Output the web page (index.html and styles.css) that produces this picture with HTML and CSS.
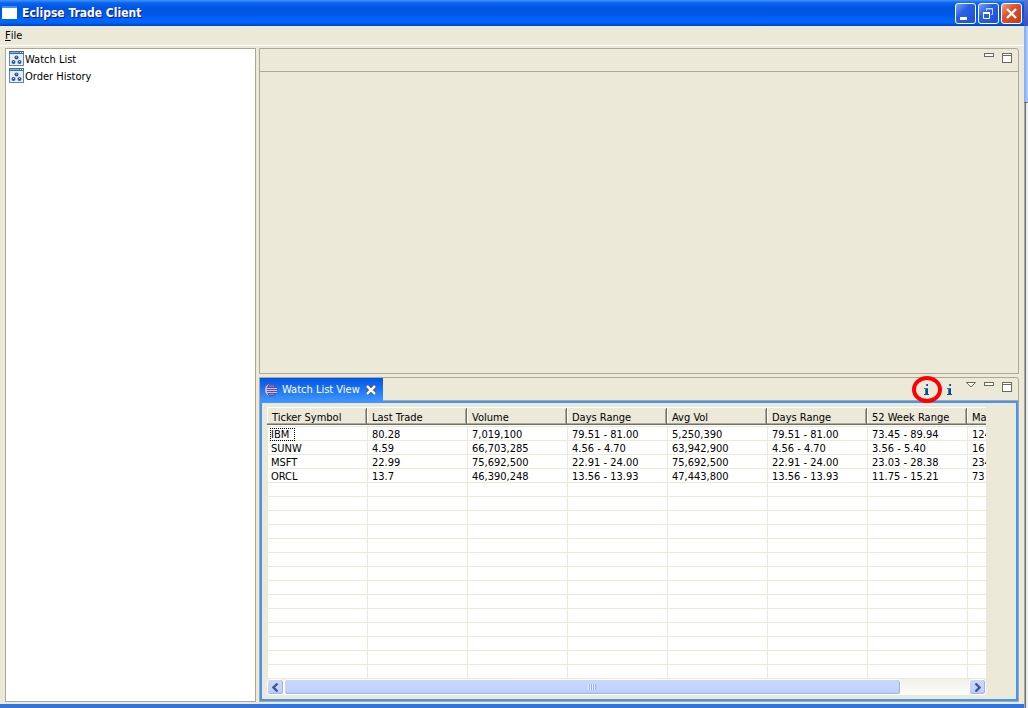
FILE: index.html
```html
<!DOCTYPE html>
<html lang="en">
<head>
  <meta charset="UTF-8">
  <meta name="viewport" content="width=device-width, initial-scale=1.0">
  <title>Eclipse Trade Client</title>
  <link rel="stylesheet" href="styles.css">
</head>
<body>
  <svg class="defs" width="0" height="0" aria-hidden="true">
    <symbol id="icon-view" viewBox="0 0 15 15">
      <rect x="0.5" y="0.5" width="14" height="14" fill="#e6eff8" stroke="#5f86b2"/>
      <rect x="0" y="0" width="15" height="3" fill="#3a6da8"/>
      <path d="M1 1h9v1H1z" fill="#7db0e0"/>
      <path d="M11 1h1v1h-1zM13 1h1v1h-1z" fill="#fff"/>
      <circle cx="7.5" cy="6.5" r="2" fill="#2f5a96"/>
      <circle cx="4.5" cy="11" r="2" fill="#2f5a96"/>
      <circle cx="10.5" cy="11" r="2" fill="#2f5a96"/>
      <path d="M7 5.500h1v1H7zM4 10h1v1H4zM10 10h1v1h-1z" fill="#b4cdec"/>
    </symbol>
    <symbol id="icon-min" viewBox="0 0 10 10">
      <rect x="0.5" y="0.5" width="9" height="3" fill="#fff" stroke="#6b6a5c"/>
    </symbol>
    <symbol id="icon-max" viewBox="0 0 10 10">
      <rect x="0.5" y="0.5" width="9" height="9" fill="#fff" stroke="#6b6a5c"/>
      <path d="M0 2h10v1H0z" fill="#6b6a5c"/>
    </symbol>
    <symbol id="icon-info" viewBox="0 0 6 11">
      <path d="M2 0h2v2H2zM0 4h4v6h1v1H0v-1h1V5H0z" fill="#2f7db8"/>
      <path d="M3 0h1v2H3zM2 5h2v5H2zM0 10h5v1H0z" fill="#124a86"/>
    </symbol>
  </svg>

  <div class="window">
    <header class="titlebar">
      <span class="app-icon"></span>
      <h1>Eclipse Trade Client</h1>
      <div class="window-buttons">
        <button class="win-btn" aria-label="Minimize">
          <svg width="19" height="19"><path d="M4 13h7v3H4z" fill="#fff"/></svg>
        </button>
        <button class="win-btn" aria-label="Restore">
          <svg width="19" height="19"><path d="M7.500 7V4.500h6v6H12M7 5h7" fill="none" stroke="#c9d8fa"/><path d="M4.500 8v6.500h6V8M4 8.500h7M4 9.500h7" fill="none" stroke="#fff"/></svg>
        </button>
        <button class="win-btn close" aria-label="Close">
          <svg width="19" height="19"><path d="M5 5l9 9M14 5l-9 9" stroke="#fff" stroke-width="2.400"/></svg>
        </button>
      </div>
    </header>

    <nav class="menubar">
      <button><u>F</u>ile</button>
    </nav>

    <main class="workbench">
      <ul class="tree">
        <li><svg width="15" height="15"><use href="#icon-view"/></svg><a href="#watch">Watch List</a></li>
        <li><svg width="15" height="15"><use href="#icon-view"/></svg><a href="#orders">Order History</a></li>
      </ul>

      <div class="stack">
        <section class="pane editor">
          <div class="pane-head">
            <div class="pane-tools">
              <button aria-label="Minimize"><svg width="10" height="10"><use href="#icon-min"/></svg></button>
              <button aria-label="Maximize"><svg width="10" height="10"><use href="#icon-max"/></svg></button>
            </div>
          </div>
        </section>

        <section class="pane view" id="watch">
          <div class="pane-head">
            <div class="tab">
              <svg width="14" height="14" viewBox="0 0 14 14">
                <circle cx="7" cy="7" r="6.500" fill="#5a50a0"/>
                <path d="M5 1a6.500 6.500 0 0 0 0 12A9 9 0 0 1 5 1z" fill="#d9b6cf"/>
                <path d="M2 5.500h11M2 7.500h11M2 9.500h11" stroke="#c4c4ea"/>
                <path d="M5 3h5M5 11.500h5" stroke="#8f86cc"/>
              </svg>
              <h2>Watch List View</h2>
              <button aria-label="Close view">
                <svg width="10" height="10" viewBox="0 0 10 10"><path d="M1 1l8 8M9 1L1 9" stroke="#413b2c" stroke-width="4"/><path d="M1 1l8 8M9 1L1 9" stroke="#fff" stroke-width="2.500"/></svg>
              </button>
            </div>
            <div class="pane-tools">
              <button class="info marked" aria-label="Add symbol"><svg width="6" height="11"><use href="#icon-info"/></svg></button>
              <button class="info" aria-label="Remove symbol"><svg width="6" height="11"><use href="#icon-info"/></svg></button>
              <button aria-label="View menu"><svg width="10" height="6"><path d="M0.500 0.500h9L5 5z" fill="#fff" stroke="#6b6a5c"/></svg></button>
              <button aria-label="Minimize"><svg width="10" height="10"><use href="#icon-min"/></svg></button>
              <button aria-label="Maximize"><svg width="10" height="10"><use href="#icon-max"/></svg></button>
            </div>
          </div>

          <div class="view-body">
            <div class="table-area">
              <div class="table-clip">
                <table>
                  <thead>
                    <tr><th>Ticker Symbol</th><th>Last Trade</th><th>Volume</th><th>Days Range</th><th>Avg Vol</th><th>Days Range</th><th>52 Week Range</th><th>Ma</th></tr>
                  </thead>
                  <tbody>
                    <tr><td><span class="focus">IBM</span></td><td>80.28</td><td>7,019,100</td><td>79.51 - 81.00</td><td>5,250,390</td><td>79.51 - 81.00</td><td>73.45 - 89.94</td><td>124</td></tr>
                    <tr><td>SUNW</td><td>4.59</td><td>66,703,285</td><td>4.56 - 4.70</td><td>63,942,900</td><td>4.56 - 4.70</td><td>3.56 - 5.40</td><td>16</td></tr>
                    <tr><td>MSFT</td><td>22.99</td><td>75,692,500</td><td>22.91 - 24.00</td><td>75,692,500</td><td>22.91 - 24.00</td><td>23.03 - 28.38</td><td>234</td></tr>
                    <tr><td>ORCL</td><td>13.7</td><td>46,390,248</td><td>13.56 - 13.93</td><td>47,443,800</td><td>13.56 - 13.93</td><td>11.75 - 15.21</td><td>73</td></tr>
                  </tbody>
                </table>
              </div>
              <div class="scrollbar">
                <button aria-label="Scroll left"><svg width="7" height="9"><path d="M5.500 0.500l-4 4 4 4" fill="none" stroke="#42598c" stroke-width="2.400"/></svg></button>
                <div class="track"><div class="thumb"><span class="grip"></span></div></div>
                <button aria-label="Scroll right"><svg width="7" height="9"><path d="M1.500 0.500l4 4-4 4" fill="none" stroke="#42598c" stroke-width="2.400"/></svg></button>
              </div>
            </div>
          </div>
        </section>
      </div>
    </main>
  </div>

  <!-- edge of the window behind -->
  <div class="behind">
    <div class="behind-title"></div>
    <div class="behind-bar"></div>
    <div class="behind-page"></div>
  </div>
</body>
</html>
```
FILE: styles.css
```css
* {
  box-sizing: border-box;
}

body {
  margin: 0;
  height: 100vh;
  display: flex;
  overflow: hidden;
  font-family: "DejaVu Sans Condensed", "DejaVu Sans", sans-serif;
  font-size: 11px;
  line-height: 14px;
  color: #000;
  background: #ece9d8;
}

button {
  font: inherit;
  color: inherit;
  padding: 0;
  border: 0;
  background: none;
  display: flex;
  align-items: center;
  justify-content: center;
}

svg {
  display: block;
}

.defs {
  position: absolute;
}

.window {
  flex: 1;
  min-width: 0;
  display: flex;
  flex-direction: column;
  border-bottom: 4px solid #2f74e0;
}

/* Title bar */
.titlebar {
  height: 26px;
  display: flex;
  align-items: center;
  padding: 0 2px;
  background: linear-gradient(#3d95ff 0, #0a63ee 3px, #0055e0 8px, #0058e8 15px, #0066ff 20px, #0062f8 23px, #0040b8 26px);
}

.app-icon {
  width: 15px;
  height: 13px;
  margin-bottom: 2px;
  background: #fff;
  border-top: 2px solid #3a90ff;
}

.titlebar h1 {
  flex: 1;
  margin: 0 0 0 5px;
  font-size: 12px;
  color: #fff;
  text-shadow: 1px 1px 0 #0a1883;
}

.window-buttons {
  display: flex;
  gap: 2px;
}

.win-btn {
  width: 21px;
  height: 21px;
  border: 1px solid #fff;
  border-radius: 3px;
  background: linear-gradient(135deg, #7ba0f4, #2a5fe4 40%, #1e4fd6);
}

.win-btn.close {
  background: linear-gradient(135deg, #f0a088, #e0502c 40%, #c93a12);
}

/* Menu */
.menubar {
  height: 20px;
  display: flex;
  padding: 0 5px;
  border-bottom: 1px solid #fff;
}

/* Workbench */
.workbench {
  flex: 1;
  min-height: 0;
  display: flex;
  gap: 3px;
  padding: 2px 5px;
}

.tree {
  width: 251px;
  margin: 0;
  padding: 2px 3px;
  list-style: none;
  background: #fff;
  border: 1px solid #aca899;
}

.tree li {
  height: 17px;
  display: flex;
  align-items: flex-start;
  gap: 1px;
}

.tree a {
  padding-top: 2px;
  color: #000;
  text-decoration: none;
}

.stack {
  flex: 1;
  min-width: 0;
  display: flex;
  flex-direction: column;
  gap: 3px;
}

.pane {
  display: flex;
  flex-direction: column;
  min-height: 0;
  border: 1px solid #aca899;
  border-radius: 0 3px 0 0;
}

.editor {
  flex: 1;
}

.view {
  height: 325px;
}

.pane-head {
  height: 23px;
  display: flex;
  flex-shrink: 0;
  border-bottom: 1px solid #aca899;
}

.pane-tools {
  display: flex;
  align-items: flex-start;
  gap: 8px;
  margin-left: auto;
  padding: 4px 6px 0 0;
}

.tab {
  height: 23px;
  display: flex;
  align-items: center;
  gap: 4px;
  padding: 0 7px 0 4px;
  color: #fff;
  background: linear-gradient(#0055e5, #3d95ff);
}

.tab h2 {
  margin: 0;
  font-size: 11px;
  font-weight: normal;
}

.tab button {
  margin-left: 2px;
}

.info {
  margin: 2px 5px 0 4px;
}

.info.marked {
  position: relative;
}

.info.marked::after {
  content: "";
  position: absolute;
  inset: -8px -12px;
  border: 4px solid #f00;
  border-radius: 50%;
}

/* Quote table */
.view-body {
  flex: 1;
  min-height: 0;
  display: flex;
  padding: 4px 30px 4px 5px;
  border: 2px solid #3d95ff;
}

.table-area {
  flex: 1;
  min-width: 0;
  display: flex;
  flex-direction: column;
}

.table-clip {
  flex: 1;
  min-height: 0;
  overflow: hidden;
  background-color: #fff;
  background-image:
    linear-gradient(90deg, #ece9d8 1px, transparent 1px),
    linear-gradient(#ece9d8 1px, transparent 1px);
  background-size: 100px 14px;
  background-position: 0 19px;
}

table {
  width: 800px;
  table-layout: fixed;
  border-spacing: 0;
}

th,
td {
  padding: 1px 5px 0;
  white-space: nowrap;
}

th {
  height: 20px;
  padding-right: 0;
  font-weight: normal;
  text-align: left;
  background:
    linear-gradient(#716f64, #716f64) right 0 top 1px / 1px 16px no-repeat,
    linear-gradient(#aca899, #aca899) right 1px top 2px / 1px 14px no-repeat,
    linear-gradient(90deg, #fff 1px, transparent 1px) 0 0 / 100% 16px no-repeat,
    linear-gradient(#fff 1px, #ece9d8 1px 16px, #aca899 16px 17px, #716f64 17px 18px, #fff 18px 19px, #ece9d8 19px);
}

td {
  height: 14px;
  line-height: 13px;
}

td:first-child {
  padding-left: 4px;
}

.focus {
  display: block;
  width: 25px;
  margin-left: -1px;
  padding-left: 1px;
  outline: 1px dotted #000;
  outline-offset: -1px;
}

/* Scroll bar */
.scrollbar {
  height: 16px;
  display: flex;
}

.scrollbar button,
.thumb {
  border: 1px solid #fff;
  border-radius: 3px;
  box-shadow: inset 0 -1px 0 #9bb4ea, inset -1px 0 0 #9bb4ea;
  background: linear-gradient(#c9d7fc, #c3d3fd 70%, #b4c8f6);
}

.scrollbar button {
  width: 17px;
}

.track {
  flex: 1;
  display: flex;
  background: linear-gradient(#f0efe8, #fefefb);
}

.thumb {
  width: 90%;
  display: flex;
  align-items: center;
  justify-content: center;
}

.grip {
  width: 8px;
  height: 6px;
  background: repeating-linear-gradient(90deg, #eef4fe 0 1px, #8cb0f8 1px 2px);
}

/* Strip of the window behind */
.behind {
  width: 4px;
  display: flex;
  flex-direction: column;
}

.behind-title {
  height: 26px;
  background: linear-gradient(#5a72d0, #3c50b8);
}

.behind-bar {
  height: 76px;
  background: linear-gradient(90deg, #8fb0f0 2px, #a9c6fb 2px);
}

.behind-page {
  flex: 1;
  border-top: 1px solid #716f64;
  background: linear-gradient(90deg, #aca899 1px, #716f64 1px 2px, #eaeefc 2px);
}
```
